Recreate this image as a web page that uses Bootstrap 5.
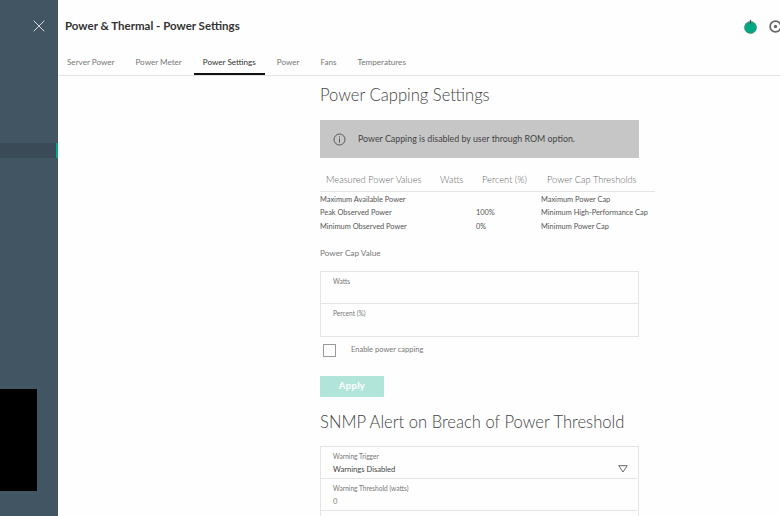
<!DOCTYPE html>
<html lang="en"><head><meta charset="utf-8"><title>Power Settings</title>
<link href="https://cdn.jsdelivr.net/npm/bootstrap@5.3.0/dist/css/bootstrap.min.css" rel="stylesheet">
<style>
html,body{height:516px;overflow:hidden;background:#fefefe;font-family:Lato,"Open Sans",sans-serif;color:#555}
.shell{height:516px}
.side{width:58px;background:#425563;flex:none}
.closer{height:143px;padding:20px 0 0 33px}
.closer svg{display:block}
.sel-row{height:15px;background:#3a4a56;border-right:2px solid #01a982}
.blackbox{width:37px;height:102px;background:#000;margin-top:231px}
.work{min-width:0;overflow:hidden}
.titlebar{height:52px;padding:0 0 0 7px}
.titlebar h1{font-size:11.5px;font-weight:700;color:#333;margin:0;white-space:nowrap}
.tabsbar{height:24px;border-bottom:1px solid #e4e4e4;gap:3px}
.tabsbar a{font-size:8.1px;color:#777;padding:4px 9px 0;height:23px;text-decoration:none;display:block}
.tabsbar a.on{color:#333;border-bottom:2px solid #111}
.pane{margin-left:262px;width:335px;padding-top:9px}
.pane h2{font-size:16.6px;font-weight:300;color:#444;margin:0;line-height:20px;white-space:nowrap}
.info{width:319px;height:38px;background:#c6c6c6;margin-top:15px;padding-left:13px;gap:12px;font-size:8.85px;color:#444}
.vals{margin-top:11px;width:335px;font-size:7.4px;color:#444;table-layout:fixed}
.vals thead th{font-size:9.3px;font-weight:300;color:#666;height:22px;padding:0 0 0 6px;border-bottom:1px solid #e4e4e4;vertical-align:middle;background:none;white-space:nowrap}
.vals td{padding:0;height:14px;border:0;background:none;color:#555;white-space:nowrap}
.vals tbody tr:first-child td{padding-top:2px;height:16px}
.cap-label{font-size:8.2px;color:#777;margin-top:12px;line-height:12px}
.fieldset{width:319px;border:1px solid #e4e4e4;margin-top:12px}
.fld{height:32px;padding:5px 12px 0;border-bottom:1px solid #e4e4e4;font-size:6.6px;color:#777;line-height:9px}
.fld:last-child{border-bottom:0}
.chk-row{height:26px;gap:15px;font-size:7.5px;color:#777;padding-left:3px}
.box{width:13px;height:13px;border:1px solid #999;background:#fff}
.apply{width:64px;height:21px;background:#b2e5d9;color:#fff;font-size:9.5px;font-weight:700;border:0;border-radius:0;margin-top:13px;padding:0;letter-spacing:.3px}
.pane h2.snmp{margin-top:15px}
.fieldset.alert-set{margin-top:14px;height:80px}
.fld b{font-weight:400;font-size:7.6px;color:#444;display:block;margin-top:1.5px;line-height:12px}
.fld i{font-style:normal;font-size:7.6px;color:#888;display:block;margin-top:1.5px;line-height:12px}
</style></head>
<body>
<div class="shell d-flex">
  <div class="side">
    <div class="closer"><svg width="12" height="12" viewBox="0 0 12 12"><path d="M.7.7l10.6 10.6M11.3.7L.7 11.3" stroke="#d5d9dc" stroke-width="1" fill="none"/></svg></div>
    <div class="sel-row"></div>
    <div class="blackbox"></div>
  </div>
  <div class="work flex-grow-1">
    <div class="titlebar d-flex align-items-center justify-content-between">
      <h1>Power &amp; Thermal - Power Settings</h1>
      <div class="d-flex align-items-center" style="gap:12px;margin-right:-2px">
        <svg width="13" height="15" viewBox="0 0 13 15"><circle cx="6.5" cy="8.5" r="6" fill="#01a982" stroke="#5b6b66" stroke-width=".6"/><path d="M6.5 .8v4" stroke="#4d5a56" stroke-width="1.2"/></svg>
        <svg width="13" height="13" viewBox="0 0 13 13"><circle cx="6.5" cy="6.5" r="5.4" fill="none" stroke="#666" stroke-width="1.7"/><circle cx="6.5" cy="6.5" r="1.7" fill="#666"/></svg>
      </div>
    </div>
    <nav class="tabsbar d-flex">
      <a href="#">Server Power</a><a href="#">Power Meter</a><a href="#" class="on">Power Settings</a><a href="#">Power</a><a href="#">Fans</a><a href="#">Temperatures</a>
    </nav>
    <div class="pane">
      <h2>Power Capping Settings</h2>
      <div class="info d-flex align-items-center">
        <svg width="13" height="13" viewBox="0 0 13 13"><circle cx="6.5" cy="6.5" r="5.5" fill="none" stroke="#555" stroke-width="1"/><path d="M6.5 5.6v4M6.5 3.4v1.1" stroke="#555" stroke-width="1"/></svg>
        <span>Power Capping is disabled by user through ROM option.</span>
      </div>
      <table class="table vals mb-0">
        <thead><tr><th style="width:114px">Measured Power Values</th><th style="width:42px">Watts</th><th style="width:65px">Percent (%)</th><th>Power Cap Thresholds</th></tr></thead>
        <tbody>
          <tr><td>Maximum Available Power</td><td></td><td></td><td>Maximum Power Cap</td></tr>
          <tr><td>Peak Observed Power</td><td></td><td>100%</td><td>Minimum High-Performance Cap</td></tr>
          <tr><td>Minimum Observed Power</td><td></td><td>0%</td><td>Minimum Power Cap</td></tr>
        </tbody>
      </table>
      <div class="cap-label">Power Cap Value</div>
      <div class="fieldset">
        <div class="fld">Watts</div>
        <div class="fld">Percent (%)</div>
      </div>
      <div class="chk-row d-flex align-items-center"><span class="box"></span><span>Enable power capping</span></div>
      <button class="btn apply d-block" type="button">Apply</button>
      <h2 class="snmp">SNMP Alert on Breach of Power Threshold</h2>
      <div class="fieldset alert-set">
        <div class="fld position-relative">Warning Trigger<b>Warnings Disabled</b>
          <svg class="position-absolute" style="right:10px;top:18px" width="10" height="8" viewBox="0 0 10 8"><path d="M.8.7h8.4L5 7z" fill="none" stroke="#666"/></svg>
        </div>
        <div class="fld">Warning Threshold (watts)<i>0</i></div>
        <div class="fld"></div>
      </div>
    </div>
  </div>
</div>
<script src="https://cdn.jsdelivr.net/npm/bootstrap@5.3.0/dist/js/bootstrap.bundle.min.js"></script>
</body></html>
